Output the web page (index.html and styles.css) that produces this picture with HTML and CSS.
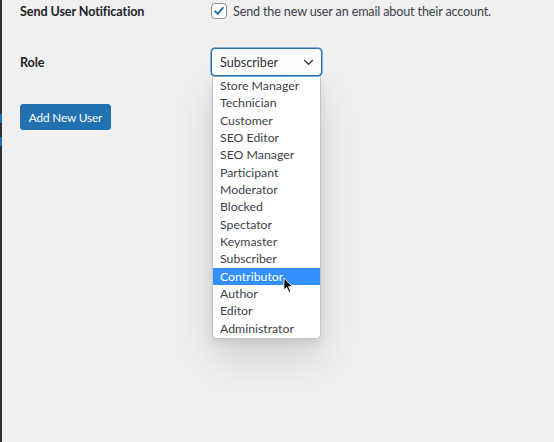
FILE: index.html
```html
<!DOCTYPE html>
<html>
<head>
<meta charset="utf-8">
<link rel="stylesheet" href="styles.css">
</head>
<body>
<div class="sidebar-edge"><span class="mark m1"></span><span class="mark m2"></span></div>
<main class="content">
  <div class="form-table">
    <div class="label">Send User Notification</div>
    <div class="field notify">
      <span class="checkbox"><svg viewBox="0 0 16 16" width="16" height="16"><path d="M3.6 8.3 L6.6 11.3 L12.4 4.4" fill="none" stroke="#2271b1" stroke-width="2.2" stroke-linecap="round" stroke-linejoin="round"/></svg></span>
      <span class="notify-text">Send the new user an email about their account.</span>
    </div>
    <div class="label role-label">Role</div>
    <div class="field role-field">
      <div class="select">
        <span>Subscriber</span>
        <svg class="chev" viewBox="0 0 12 8" width="11" height="7"><path d="M1 1.2 L6 6 L11 1.2" fill="none" stroke="#3c434a" stroke-width="1.6"/></svg>
      </div>
      <ul class="dropdown">
        <li>Store Manager</li>
        <li>Technician</li>
        <li>Customer</li>
        <li>SEO Editor</li>
        <li>SEO Manager</li>
        <li>Participant</li>
        <li>Moderator</li>
        <li>Blocked</li>
        <li>Spectator</li>
        <li>Keymaster</li>
        <li>Subscriber</li>
        <li class="active">Contributor</li>
        <li>Author</li>
        <li>Editor</li>
        <li>Administrator</li>
      </ul>
      <svg class="cursor" viewBox="0 0 12 18" width="11" height="17"><path d="M1 1 L1 14 L4 11 L6.5 16.5 L8.5 15.6 L6.1 10.2 L10.3 10.2 Z" fill="#000" stroke="#fff" stroke-width="1"/></svg>
    </div>
  </div>
  <button class="btn">Add New User</button>
</main>
</body>
</html>
```
FILE: styles.css
```css
* { box-sizing: border-box; }
html, body { margin: 0; padding: 0; }
body {
  background: #f0f0f1;
  font-family: "Lato", "Noto Sans", sans-serif;
  color: #1d2327;
  width: 554px;
  height: 442px;
  overflow: hidden;
  display: flex;
}
.sidebar-edge {
  width: 2px;
  background: #2c3338;
  flex: none;
  position: relative;
}
.mark {
  position: absolute;
  left: 0;
  width: 2px;
  background: #2271b1;
}
.m1 { top: 114px; height: 9px; }
.m2 { top: 137px; height: 9px; }
.content {
  padding: 2px 0 0 18px;
  flex: 1;
}
.form-table {
  display: grid;
  grid-template-columns: 191px 1fr;
  row-gap: 28px;
  align-items: center;
}
.label {
  font-size: 12.6px;
  font-weight: 700;
  letter-spacing: -0.1px;
  color: #1d2327;
}
.notify {
  display: flex;
  align-items: center;
  gap: 6px;
  height: 18px;
  font-size: 12.6px;
  letter-spacing: -0.15px;
  color: #3c434a;
}
.checkbox {
  width: 16px;
  height: 16px;
  border: 1px solid #8c8f94;
  border-radius: 4px;
  background: #fff;
  display: inline-flex;
  align-items: center;
  justify-content: center;
}
.checkbox svg { width: 14px; height: 14px; }
.role-field { position: relative; }
.select {
  width: 111px;
  height: 28px;
  border: 1px solid #2271b1;
  box-shadow: 0 0 0 0.5px #2271b1;
  border-radius: 4px;
  background: #fff;
  display: flex;
  align-items: center;
  justify-content: space-between;
  padding: 0 7px 0 8px;
  font-size: 12.6px;
  color: #2c3338;
}
.chev { display: block; }
.dropdown {
  position: absolute;
  left: 1px;
  top: 29px;
  width: 109px;
  margin: 0;
  padding: 0 0 1px;
  list-style: none;
  background: #fff;
  border: 1px solid #c3c4c7;
  border-top: none;
  border-radius: 0 0 5px 5px;
  box-shadow: 0 18px 40px rgba(0,0,0,0.14), 0 4px 10px rgba(0,0,0,0.08);
  font-size: 12.3px;
  color: #3c434a;
  z-index: 2;
}
.dropdown li {
  height: 17.35px;
  line-height: 17px;
  padding-left: 7px;
  white-space: nowrap;
}
.dropdown li.active {
  background: #3390ff;
  color: #fff;
}
.cursor {
  position: absolute;
  left: 72px;
  top: 229px;
  z-index: 3;
}
.btn {
  margin-top: 28px;
  height: 26px;
  width: 91px;
  padding: 0;
  background: #2271b1;
  color: #fff;
  border: 1px solid #2271b1;
  border-radius: 3px;
  font-family: inherit;
  font-size: 11.8px;
  letter-spacing: -0.15px;
  cursor: pointer;
}
```
